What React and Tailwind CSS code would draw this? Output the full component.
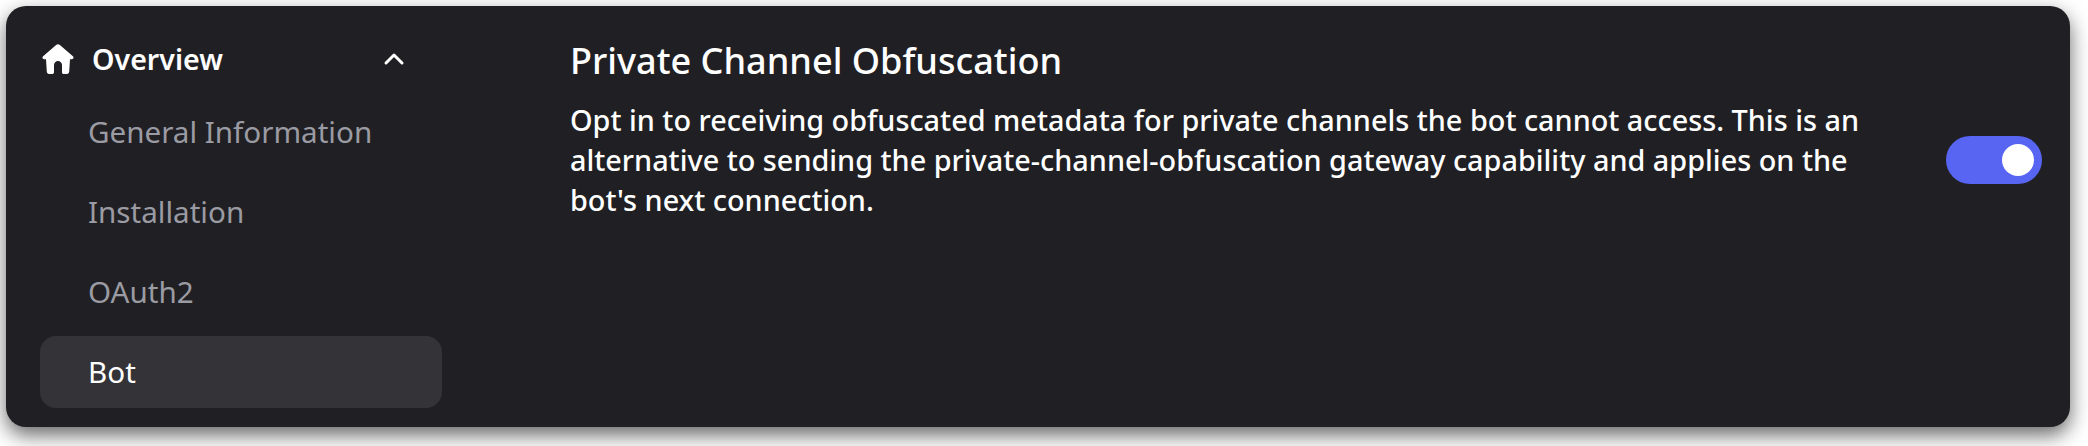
import { ChevronUp } from "lucide-react";

const items = ["General Information", "Installation", "OAuth2"];

const HomeIcon = () => (
  <svg viewBox="0 0 32 32" className="w-8 h-8 shrink-0" fill="white">
    <path d="M16 1.2c.7 0 1.3.3 1.9.8l13 11.2c1.2 1 .5 3-1.100 3H28l-.8 12.600c-.1 1.200-1 2.200-2.200 2.200h-3.300c-1 0-1.700-.8-1.700-1.800v-7.200c0-2.200-1.800-4-4-4s-4 1.800-4 4V29.200c0 1-.8 1.800-1.800 1.800H7c-1.200 0-2.100-1-2.200-2.200L4 16.200H2.200c-1.600 0-2.300-2-1.100-3l13-11.200c.6-.5 1.200-.8 1.900-.8Z" />
  </svg>
);

const Sidebar = () => (
  <div className="w-[402px] shrink-0 flex flex-col">
    <div className="h-[48px] mt-[29px] pl-[2px] flex items-center text-white">
      <HomeIcon />
      <span className="ml-[18px] text-[28.6px] font-semibold">Overview</span>
      <ChevronUp className="ml-auto mr-[32px] w-8 h-8" strokeWidth={2.25} />
    </div>
    <div className="mt-[13px] flex flex-col gap-[8px]">
      {items.map((item) => (
        <div key={item} className="h-[72px] pl-[48px] flex items-center text-[29.6px] text-[#9b9ba3]">
          {item}
        </div>
      ))}
      <div className="h-[72px] pl-[48px] flex items-center text-[29.6px] text-white bg-[#333338] rounded-[16px]">
        Bot
      </div>
    </div>
  </div>
);

export default function App() {
  return (
    <div className="w-[2088px] h-[446px] bg-white pt-[6px] pl-[6px] font-['Noto_Sans',sans-serif]">
      <div className="w-[2064px] h-[421px] bg-[#202024] rounded-[20px] shadow-[0_8px_20px_rgba(0,0,0,0.6)] pl-[34px] pr-[28px] flex">
        <Sidebar />
        <div className="ml-[128px] flex-1 flex items-start">
          <div className="w-[1300px] pt-[30px] text-white">
            <h2 className="text-[36.1px] leading-[48px] font-medium">Private Channel Obfuscation</h2>
            <p className="mt-[16px] text-[28.84px] leading-[40px] font-medium">
              Opt in to receiving obfuscated metadata for private channels the bot cannot access. This is an alternative to sending the private-channel-obfuscation gateway capability and applies on the bot's next connection.
            </p>
          </div>
          <div className="ml-auto mt-[130px] w-[96px] h-[48px] rounded-full bg-[#5865f2] flex items-center justify-end pr-[8px]">
            <div className="w-8 h-8 rounded-full bg-white" />
          </div>
        </div>
      </div>
    </div>
  );
}
